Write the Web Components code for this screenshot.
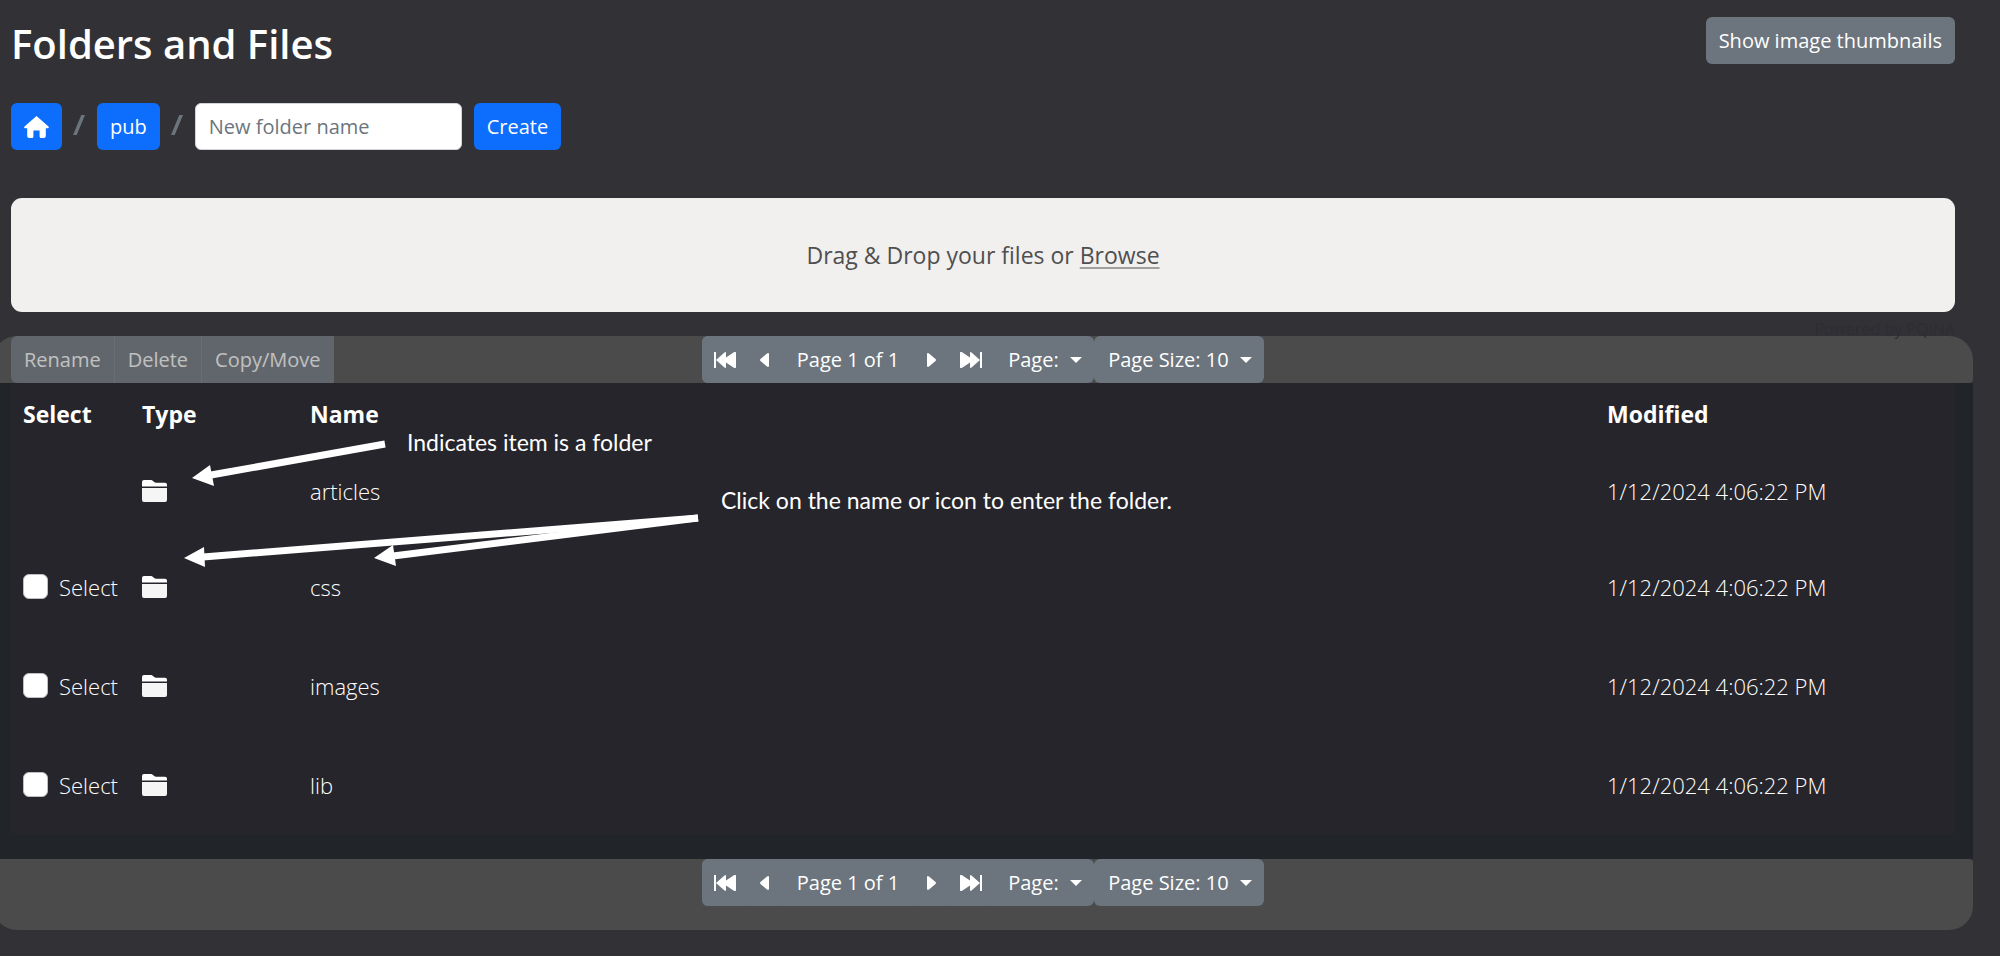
<!DOCTYPE html>
<html lang="en">
<head>
<meta charset="utf-8">
<meta name="viewport" content="width=device-width, initial-scale=1">
<title>Folders and Files</title>
<style>
  body {
    margin: 0;
    background-color: #323136;
    color: #fff;
    font-family: "Open Sans", "Noto Sans", sans-serif;
    font-size: 20px;
    line-height: 30px;
  }
</style>
</head>
<body>
<file-manager></file-manager>

<script>
/**
 * Styles shared by every button in the page.
 */
const buttonStyles = `
  button {
    box-sizing: border-box;
    height: 47px;
    padding: 0 13px;
    border: 0;
    border-radius: 6px;
    background-color: #6c757d;
    color: #fff;
    font: inherit;
    line-height: 47px;
    white-space: nowrap;
    cursor: pointer;
  }
  svg {
    display: block;
    fill: currentColor;
  }
`

/**
 * Path to the current folder, with a form to create a new one.
 */
const breadcrumbTemplate = document.createElement('template')
breadcrumbTemplate.innerHTML = `
  <style>
    ${buttonStyles}
    :host {
      display: block;
    }
    form {
      display: flex;
      align-items: center;
    }
    button {
      background-color: #0d6efd;
    }
    .slash {
      width: 12px;
      height: 20px;
      margin: 0 12px 4px 11px;
      fill: #6c757d;
    }
    input {
      box-sizing: border-box;
      width: 267px;
      height: 47px;
      margin-right: 12px;
      padding: 0 13px;
      border: 1px solid #ced4da;
      border-radius: 6px;
      background-color: #fff;
      color: #212529;
      font: inherit;
    }
    input::placeholder {
      color: #6c757d;
      opacity: 1;
    }
  </style>
  <form action="#">
    <button type="button" aria-label="Home">
      <svg width="25" height="22" viewBox="0 0 25 22"><path d="M12.5 0 24.5 10.5Q25.3 12 24 12.3H21.8V20Q21.8 22 19.8 22H17Q15.6 22 15.6 20.5V14.5H9.4V20.5Q9.4 22 8 22H5.2Q3.2 22 3.2 20V12.3H1Q-.3 12 .5 10.5Z"/></svg>
    </button>
    <svg class="slash" viewBox="0 0 12 20"><path d="M8.3 0H12L3.7 20H0Z"/></svg>
    <button type="button">pub</button>
    <svg class="slash" viewBox="0 0 12 20"><path d="M8.3 0H12L3.7 20H0Z"/></svg>
    <input type="text" name="folder" placeholder="New folder name" aria-label="New folder name">
    <button type="submit">Create</button>
  </form>
`

customElements.define('path-breadcrumb', class extends HTMLElement {
  constructor () {
    super()
    this.attachShadow({ mode: 'open' })
      .appendChild(breadcrumbTemplate.content.cloneNode(true))
    this.shadowRoot.querySelector('form')
      .addEventListener('submit', event => event.preventDefault())
  }
})

/**
 * Upload area.
 */
const dropTemplate = document.createElement('template')
dropTemplate.innerHTML = `
  <style>
    :host {
      display: block;
    }
    .panel {
      padding: 42px 20px;
      border-radius: 11px;
      background-color: #f1f0ef;
      color: #4f4f4f;
      font-size: 23px;
      text-align: center;
    }
    label {
      text-decoration: underline;
      text-decoration-color: #a0a09f;
      text-decoration-thickness: 2px;
      text-underline-offset: 3px;
      cursor: pointer;
    }
    .credit {
      display: block;
      height: 24px;
      color: #2e2d32;
      font-size: 16px;
      line-height: 34px;
      text-align: right;
      text-decoration: none;
    }
  </style>
  <div class="panel">Drag &amp; Drop your files or <label for="files">Browse</label></div>
  <input type="file" id="files" multiple hidden>
  <a class="credit" href="#">Powered by PQINA</a>
`

customElements.define('drop-zone', class extends HTMLElement {
  constructor () {
    super()
    this.attachShadow({ mode: 'open' })
      .appendChild(dropTemplate.content.cloneNode(true))
  }
})

/**
 * Paging controls, used above and below the list.
 */
const pagerTemplate = document.createElement('template')
pagerTemplate.innerHTML = `
  <style>
    ${buttonStyles}
    :host {
      display: flex;
    }
    .group {
      display: flex;
      align-items: center;
      height: 47px;
      border-radius: 6px;
      background-color: #6c757d;
    }
    button {
      padding: 0 12px;
    }
    .text {
      padding: 0 16px;
    }
    .drop {
      display: grid;
      align-items: center;
    }
    select, .drop svg {
      grid-area: 1 / 1;
    }
    select {
      height: 47px;
      padding: 0 35px 0 14px;
      border: 0;
      border-radius: 6px;
      background-color: transparent;
      color: #fff;
      font: inherit;
      appearance: none;
    }
    .drop svg {
      justify-self: end;
      margin-right: 12px;
      pointer-events: none;
    }
  </style>
  <div class="group">
    <button type="button" aria-label="First page">
      <svg width="22" height="16" viewBox="0 0 22 16"><path d="M0 0H2V16H0ZM2 8 10.500.4Q12 -.4 12 1V5.500L19.500.4Q22 -1 22 1V15Q22 17 19.500 15.600L12 10.500V15Q12 16.400 10.500 15.600Z"/></svg>
    </button>
    <button type="button" aria-label="Previous page">
      <svg width="9" height="14" viewBox="0 0 9 14"><path d="M.5 6 7 .5Q9 -.7 9 1.500V12.500Q9 14.700 7 13.500L.5 8Q-.5 7 .5 6Z"/></svg>
    </button>
    <span class="text">Page 1 of 1</span>
    <button type="button" aria-label="Next page">
      <svg width="9" height="14" viewBox="0 0 9 14"><path d="M8.500 6 2 .5Q0 -.7 0 1.500V12.500Q0 14.700 2 13.500L8.500 8Q9.500 7 8.500 6Z"/></svg>
    </button>
    <button type="button" aria-label="Last page">
      <svg width="22" height="16" viewBox="0 0 22 16"><path d="M22 0H20V16H22ZM20 8 11.500.4Q10 -.4 10 1V5.500L2.500.4Q0 -1 0 1V15Q0 17 2.500 15.600L10 10.500V15Q10 16.400 11.500 15.600Z"/></svg>
    </button>
    <div class="drop">
      <select aria-label="Page"><option>Page:</option></select>
      <svg width="12" height="6" viewBox="0 0 12 6"><path d="M0 0H12L6 6Z"/></svg>
    </div>
  </div>
  <div class="group drop">
    <select aria-label="Page size"><option>Page Size: 10</option></select>
    <svg width="12" height="6" viewBox="0 0 12 6"><path d="M0 0H12L6 6Z"/></svg>
  </div>
`

customElements.define('page-pager', class extends HTMLElement {
  constructor () {
    super()
    this.attachShadow({ mode: 'open' })
      .appendChild(pagerTemplate.content.cloneNode(true))
  }
})

/**
 * Bar with actions at the left and a pager in the middle.
 */
const barTemplate = document.createElement('template')
barTemplate.innerHTML = `
  <style>
    :host {
      display: grid;
      grid-template-columns: 1fr auto 1fr;
      align-items: start;
      padding: 0 18px;
      border-radius: 24px 24px 4px 4px;
      background-color: #4b4b4b;
    }
    :host([bottom]) {
      padding-bottom: 24px;
      border-radius: 4px 4px 24px 24px;
    }
    page-pager {
      grid-column: 2;
    }
  </style>
  <slot></slot>
  <page-pager></page-pager>
`

customElements.define('tool-bar', class extends HTMLElement {
  constructor () {
    super()
    this.attachShadow({ mode: 'open' })
      .appendChild(barTemplate.content.cloneNode(true))
  }
})

const actionsTemplate = document.createElement('template')
actionsTemplate.innerHTML = `
  <style>
    ${buttonStyles}
    :host {
      display: flex;
      justify-self: start;
      opacity: .65;
    }
    button {
      border-radius: 0;
      cursor: default;
    }
    button:first-child, style + button {
      border-radius: 6px 0 0 6px;
    }
    button + button {
      border-left: 1px solid #7a8289;
    }
  </style>
`
actionsTemplate.innerHTML += ['Rename', 'Delete', 'Copy/Move']
  .map(name => `<button type="button" disabled>${name}</button>`).join('')

customElements.define('file-actions', class extends HTMLElement {
  constructor () {
    super()
    this.attachShadow({ mode: 'open' })
      .appendChild(actionsTemplate.content.cloneNode(true))
  }
})

/**
 * The list of folders.
 */
const items = [
  { name: 'articles', selectable: false },
  { name: 'css', selectable: true },
  { name: 'images', selectable: true },
  { name: 'lib', selectable: true }
]

const folderIcon = `
  <svg width="25" height="22" viewBox="0 0 25 22"><path fill="#fff" d="M0 6.500V2Q0 0 2 0H9Q10 0 11 1L12.500 2.300Q13 2.700 14 2.700H23Q25 2.700 25 4.700V6.500Z"/><path fill="#f5f5f5" d="M0 8H25V20Q25 22 23 22H2Q0 22 0 20Z"/></svg>
`

const tableTemplate = document.createElement('template')
tableTemplate.innerHTML = `
  <style>
    :host {
      display: block;
      padding: 0 18px 25px;
      background-color: #212529;
      font-size: 23px;
    }
    table {
      width: 100%;
      table-layout: fixed;
      border-collapse: collapse;
      background-color: #26252b;
    }
    th, td {
      height: 99px;
      padding: 0 12px;
      text-align: left;
      white-space: nowrap;
    }
    th {
      height: 61px;
      font-weight: 700;
    }
    tr.plain td {
      height: 93px;
    }
    td {
      font-size: 22px;
      font-weight: 300;
    }
    .select {
      width: 95px;
    }
    .type {
      width: 144px;
    }
    .modified {
      width: 336px;
    }
    label {
      display: flex;
      align-items: center;
      gap: 11px;
    }
    input {
      box-sizing: border-box;
      width: 25px;
      height: 25px;
      flex: none;
      margin: 0;
      border: 1px solid #bfbfbf;
      border-radius: 6px;
      background-color: #fff;
      appearance: none;
    }
    a {
      color: inherit;
      text-decoration: none;
    }
    svg {
      display: block;
    }
  </style>
  <table>
    <thead>
      <tr>
        <th class="select">Select</th>
        <th class="type">Type</th>
        <th>Name</th>
        <th class="modified">Modified</th>
      </tr>
    </thead>
    <tbody>
      ${items.map(item => `
        <tr class="${item.selectable ? '' : 'plain'}">
          <td>${item.selectable ? `<label><input type="checkbox" name="${item.name}">Select</label>` : ''}</td>
          <td><a href="#" aria-label="Open ${item.name}">${folderIcon}</a></td>
          <td><a href="#">${item.name}</a></td>
          <td>1/12/2024 4:06:22 PM</td>
        </tr>
      `).join('')}
    </tbody>
  </table>
`

customElements.define('file-table', class extends HTMLElement {
  constructor () {
    super()
    this.attachShadow({ mode: 'open' })
      .appendChild(tableTemplate.content.cloneNode(true))
  }
})

/**
 * Help notes with arrows, laid over the list.
 */
const notesTemplate = document.createElement('template')
notesTemplate.innerHTML = `
  <style>
    :host {
      position: absolute;
      top: 0;
      left: 18px;
      pointer-events: none;
      font-family: Lato, sans-serif;
      font-size: 23px;
    }
    svg {
      display: block;
      fill: #fff;
      stroke: #fff;
    }
    .note {
      position: absolute;
      white-space: nowrap;
    }
    .folder {
      top: 44px;
      left: 396px;
    }
    .enter {
      top: 102px;
      left: 710px;
    }
    line {
      stroke-width: 7px;
    }
    polygon {
      stroke: none;
    }
  </style>
  <svg width="700" height="200" viewBox="0 0 700 200">
    <line x1="374" y1="61" x2="200" y2="92"/>
    <polygon points="181,95 199,82 203,103"/>
    <line x1="687" y1="135" x2="192" y2="174"/>
    <polygon points="173,175 193,164 194,184"/>
    <line x1="687" y1="135" x2="382" y2="173"/>
    <polygon points="363,175 382,162 385,183"/>
  </svg>
  <span class="note folder">Indicates item is a folder</span>
  <span class="note enter">Click on the name or icon to enter the folder.</span>
`

customElements.define('help-notes', class extends HTMLElement {
  constructor () {
    super()
    this.attachShadow({ mode: 'open' })
      .appendChild(notesTemplate.content.cloneNode(true))
  }
})

/**
 * The whole page.
 */
const managerTemplate = document.createElement('template')
managerTemplate.innerHTML = `
  <style>
    ${buttonStyles}
    :host {
      display: block;
      padding: 17px 45px 26px 11px;
      overflow: hidden;
    }
    header {
      display: flex;
      align-items: flex-start;
      justify-content: space-between;
      margin-bottom: 32px;
    }
    h1 {
      margin: 0;
      font-size: 40px;
      font-weight: 600;
      line-height: 54px;
    }
    path-breadcrumb {
      margin-bottom: 48px;
    }
    .list {
      margin: 0 -18px;
    }
    .content {
      position: relative;
    }
  </style>
  <header>
    <h1>Folders and Files</h1>
    <button type="button">Show image thumbnails</button>
  </header>
  <path-breadcrumb></path-breadcrumb>
  <drop-zone></drop-zone>
  <div class="list">
    <tool-bar><file-actions></file-actions></tool-bar>
    <div class="content">
      <file-table></file-table>
      <help-notes></help-notes>
    </div>
    <tool-bar bottom></tool-bar>
  </div>
`

customElements.define('file-manager', class extends HTMLElement {
  constructor () {
    super()
    this.attachShadow({ mode: 'open' })
      .appendChild(managerTemplate.content.cloneNode(true))
  }
})
</script>
</body>
</html>
